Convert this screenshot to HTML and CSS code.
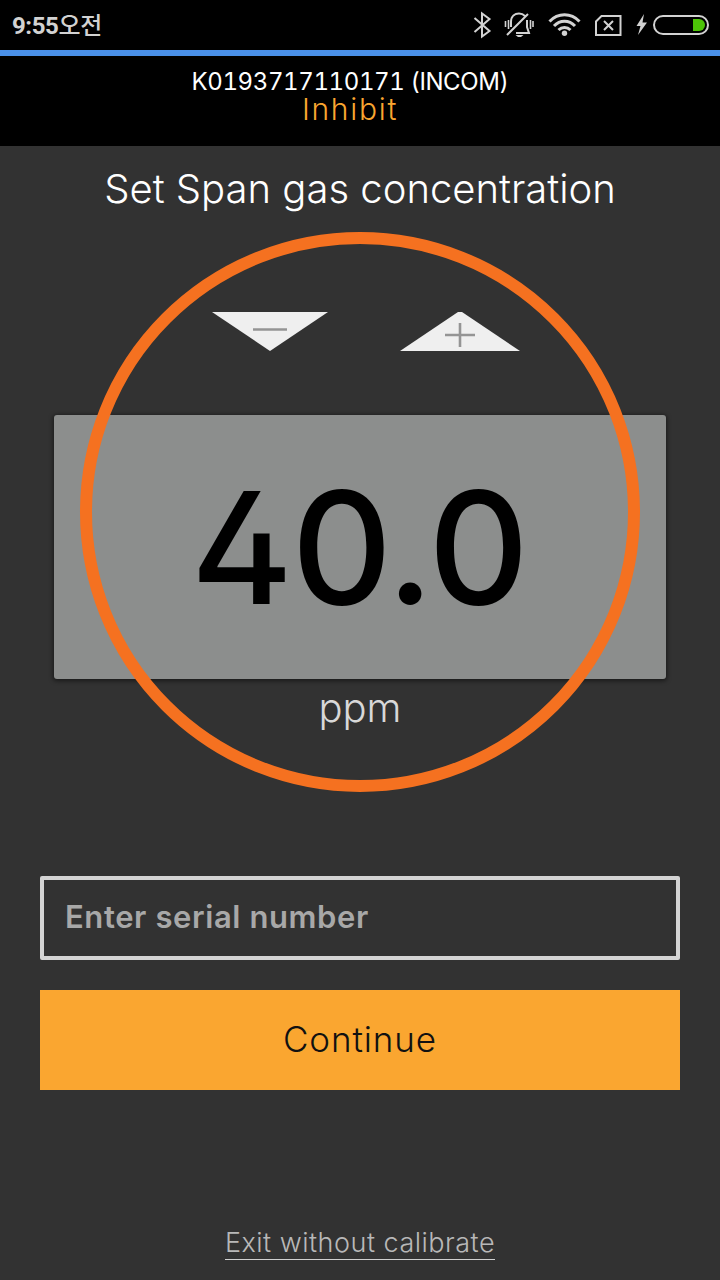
FILE: index.html
```
<!DOCTYPE html>
<html lang="en">
<head>
    <meta charset="UTF-8">
    <meta name="viewport" content="width=device-width, initial-scale=1.0">
    <title>Set Span gas concentration</title>
    <link rel="stylesheet" href="styles.css">
</head>
<body>

<div class="status-bar">
    <span class="clock">9:55<span class="clock-ko">오전</span></span>
    <svg class="status-icons" width="240" height="50" viewBox="0 0 240 50" fill="none" stroke="#d2d2d2" stroke-width="2">
        <!-- bluetooth -->
        <path d="M-5.500 18 L9.500 31 L2 36.500 V13.500 L9.500 19 L-5.500 32"/>
        <!-- muted bell -->
        <path d="M31 27 V22 C31 16 35 13.500 39 13.500 C42 13.500 44 15 45 16 M47 20 V27 L49 33 H36 M27 35 L48 14"/>
        <path d="M25.500 21 V27 M28.500 20 V29 M50.500 20 V29 M53 21 V27" stroke-width="1.600"/>
        <path d="M35.500 35 H43.500 L41 37 H38 Z" fill="#d2d2d2" stroke="none"/>
        <!-- wifi -->
        <path d="M69.500 21.500 C78 12.500 91 12.500 99.500 21.500 M74 26 C80 19.500 89 19.500 95 26 M78.500 30 C82 26.500 87 26.500 90.500 30" stroke-width="3"/>
        <circle cx="84.500" cy="33.300" r="2.700" fill="#d2d2d2" stroke="none"/>
        <!-- no sim -->
        <path d="M121.500 16 H140.500 V35 H116 V21.500 Z M124 21 L133 30 M133 21 L124 30"/>
        <!-- charging battery -->
        <path d="M164 14 L156.500 26 H160.500 L158 35 L167 22.500 H162.500 Z" fill="#d2d2d2" stroke="none"/>
        <rect x="174" y="16" width="54" height="18" rx="9"/>
        <path d="M213 19 H219 A6 6 0 0 1 219 31 H213 Z" fill="#4dc407" stroke="none"/>
    </svg>
</div>

<header class="device-header">
    <div class="device-id">K0193717110171 (INCOM)</div>
    <div class="device-mode">Inhibit</div>
</header>

<main class="content">
    <h1 class="title">Set Span gas concentration</h1>

    <section class="dial">
        <div class="steppers">
            <svg class="step-down" width="116" height="39" viewBox="0 0 116 39">
                <path d="M0 0 H116 L58 39 Z" fill="#efefef"/>
                <path d="M41 17.500 H75" stroke="#949494" stroke-width="2.600"/>
            </svg>
            <svg class="step-up" width="120" height="39" viewBox="0 0 120 39">
                <path d="M0 39 L58 0 H62 L120 39 Z" fill="#efefef"/>
                <path d="M45 23 H75 M60 11 V35" stroke="#949494" stroke-width="2.600"/>
            </svg>
        </div>
        <div class="value-box">40.0</div>
        <div class="unit">ppm</div>
        <div class="ring"></div>
    </section>

    <input class="serial" type="text" placeholder="Enter serial number">
    <button class="continue">Continue</button>
    <a class="exit">Exit without calibrate</a>
</main>

</body>
</html>
```
FILE: styles.css
```
body {
    margin: 0;
    height: 1280px;
    display: flex;
    flex-direction: column;
    overflow: hidden;
    background-color: #323232;
    color: #fff;
    font-family: Inter, "Liberation Sans", sans-serif;
    font-weight: 300;
}
.status-bar {
    display: flex;
    justify-content: space-between;
    height: 50px;
    padding-left: 12px;
    background-color: #000;
    border-bottom: 6px solid #4a90e8;
}
.clock {
    color: #d2d2d2;
    font-family: Roboto, "Noto Sans CJK KR", sans-serif;
    font-size: 24px;
    font-weight: 700;
    line-height: 48px;
    letter-spacing: -0.4px;
}
.clock-ko {
    font-family: "Noto Sans CJK KR", sans-serif;
    font-weight: 500;
}
.status-icons {
    overflow: visible;
}
.device-header {
    height: 76px;
    padding: 14px 20px 0 0;
    background-color: #000;
    text-align: center;
}
.device-id {
    height: 26px;
    font-size: 24px;
    line-height: 24px;
    font-weight: 380;
    font-feature-settings: "tnum";
    letter-spacing: -0.4px;
}
.device-mode {
    font-size: 30px;
    line-height: 26px;
    color: #faa630;
    letter-spacing: 1.7px;
}
.content {
    display: flex;
    flex-direction: column;
    align-items: center;
}
.title {
    margin: 0;
    height: 86px;
    font-size: 40px;
    line-height: 86px;
    font-weight: 300;
    white-space: nowrap;
}
.dial {
    position: relative;
    width: 720px;
    height: 560px;
}
.steppers {
    display: flex;
    align-items: flex-start;
    gap: 72px;
    padding: 80px 0 0 212px;
}
.value-box {
    box-sizing: border-box;
    width: 612px;
    height: 264px;
    margin: 64px auto 0;
    padding-right: 2px;
    border-radius: 3px;
    background-color: #8c8e8d;
    box-shadow: 0 1px 4px 1px rgba(0, 0, 0, 0.5);
    color: #000;
    font-size: 156px;
    font-weight: 550;
    line-height: 266px;
    letter-spacing: -1.5px;
    text-align: center;
    font-feature-settings: "cv02";
}
.unit {
    font-size: 40px;
    line-height: 58px;
    text-align: center;
    color: #d8d8d8;
}
/* ring drawn on top of the value box */
.ring {
    position: absolute;
    top: 0;
    left: 80px;
    box-sizing: border-box;
    width: 560px;
    height: 560px;
    border: 12px solid #f57120;
    border-radius: 50%;
    pointer-events: none;
}
.serial {
    box-sizing: border-box;
    width: 640px;
    height: 84px;
    margin-top: 84px;
    padding: 0 21px 3px;
    border: 4px solid #d4d4d4;
    border-radius: 2px;
    background-color: transparent;
    color: #fff;
    font: 600 31px Inter, "Liberation Sans", sans-serif;
    letter-spacing: 0.6px;
}
.serial::placeholder {
    color: #a8a8a8;
}
.continue {
    width: 640px;
    height: 100px;
    margin-top: 30px;
    padding: 0 0 2px;
    border: 0;
    background-color: #faa630;
    color: #111;
    font: 300 35px Inter, "Liberation Sans", sans-serif;
    letter-spacing: 0.9px;
}
.exit {
    margin-top: 136px;
    font-size: 27px;
    line-height: 33px;
    color: #b8b8b8;
    letter-spacing: 0.5px;
    border-bottom: 1px solid #d0d0d0;
    white-space: nowrap;
}
```
